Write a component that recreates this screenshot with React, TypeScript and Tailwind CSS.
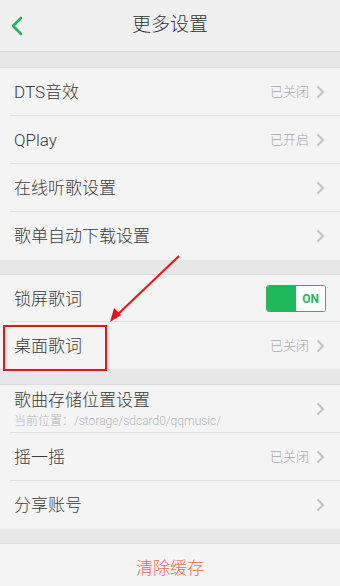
import React from "react";

const font = { fontFamily: '"Roboto", "Noto Sans CJK SC", sans-serif' };

function Chevron() {
  return (
    <svg width="10" height="14" viewBox="0 0 10 14" className="shrink-0">
      <path d="M2.5 1.5 L8 7 L2.5 12.5" fill="none" stroke="#c2c2c2" strokeWidth="2" />
    </svg>
  );
}

function Row({
  title,
  status,
  sub,
  last,
  right,
  h = "h-[48px]",
}: {
  title: string;
  status?: string;
  sub?: string;
  last?: boolean;
  right?: React.ReactNode;
  h?: string;
}) {
  return (
    <div className={`relative flex items-center ${h} pl-[14px] pr-[15px]`}>
      <div className="flex-1 flex flex-col">
        <span className="text-[17px] leading-[20px] font-light text-[#3a3a3a]">{title}</span>
        {sub && <span className="text-[12px] leading-[16px] font-light text-[#b5b5b5] mt-[3px]">{sub}</span>}
      </div>
      {right ?? (
        <div className="flex items-center gap-[6px]">
          {status && <span className="text-[13px] font-light text-[#a8a8a8]">{status}</span>}
          <Chevron />
        </div>
      )}
      {!last && <div className="absolute left-[10px] right-0 bottom-0 h-px bg-[#dedede]" />}
    </div>
  );
}

function Gap({ h }: { h: string }) {
  return <div className={`${h} bg-[#e7e7e7] border-b border-[#dcdcdc]`} />;
}

export default function App() {
  return (
    <div className="relative w-[340px] h-[586px] overflow-hidden bg-[#f4f4f4]" style={font}>
      <div className="relative h-[52px] bg-[#f0f0f0] border-b border-[#d6d6d6] flex items-center justify-center">
        <svg className="absolute left-[10px] top-[16px]" width="14" height="20" viewBox="0 0 14 20">
          <path d="M11 2 L3 10 L11 18" fill="none" stroke="#1fb55a" strokeWidth="2.6" strokeLinecap="round" strokeLinejoin="round" />
        </svg>
        <span className="text-[19px] font-light text-[#333]">更多设置</span>
      </div>
      <Gap h="h-[16px]" />
      <div className="bg-[#f4f4f4]">
        <Row title="DTS音效" status="已关闭" />
        <Row title="QPlay" status="已开启" />
        <Row title="在线听歌设置" />
        <Row title="歌单自动下载设置" last />
      </div>
      <Gap h="h-[15px]" />
      <div className="bg-[#f4f4f4]">
        <Row
          title="锁屏歌词"
          h="h-[47px]"
          right={
            <div className="flex w-[60px] h-[27px] rounded-[3px] border border-[#1fb95c] overflow-hidden mr-[-1px]">
              <div className="w-[29px] bg-[#1fb95c]" />
              <div className="flex-1 bg-white flex items-center justify-center text-[12px] font-bold text-[#1fb95c]">ON</div>
            </div>
          }
        />
        <Row title="桌面歌词" status="已关闭" last h="h-[47px]" />
      </div>
      <Gap h="h-[16px]" />
      <div className="bg-[#f4f4f4]">
        <Row title="歌曲存储位置设置" sub="当前位置：/storage/sdcard0/qqmusic/" />
        <Row title="摇一摇" status="已关闭" />
        <Row title="分享账号" last />
      </div>
      <Gap h="h-[15px]" />
      <div className="flex justify-center pt-[12px]">
        <span className="text-[17px] font-light text-[#f0664b]">清除缓存</span>
      </div>

      {/* annotation */}
      <div className="absolute left-[3px] top-[325px] w-[104px] h-[46px] border-2 border-[#f01010]" />
      <svg className="absolute left-0 top-0 pointer-events-none" width="340" height="586">
        <line x1="179" y1="256" x2="115" y2="317" stroke="#f01010" strokeWidth="2" />
        <path d="M110 322 L114 308 L121 315 Z" fill="#f01010" />
      </svg>
    </div>
  );
}
